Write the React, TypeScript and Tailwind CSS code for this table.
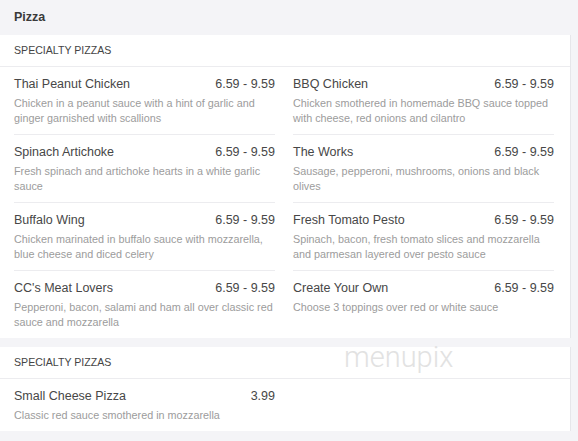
import React from "react";

type Item = { name: string; price: string; desc: string };

const specialty: Item[] = [
  { name: "Thai Peanut Chicken", price: "6.59 - 9.59", desc: "Chicken in a peanut sauce with a hint of garlic and ginger garnished with scallions" },
  { name: "BBQ Chicken", price: "6.59 - 9.59", desc: "Chicken smothered in homemade BBQ sauce topped with cheese, red onions and cilantro" },
  { name: "Spinach Artichoke", price: "6.59 - 9.59", desc: "Fresh spinach and artichoke hearts in a white garlic sauce" },
  { name: "The Works", price: "6.59 - 9.59", desc: "Sausage, pepperoni, mushrooms, onions and black olives" },
  { name: "Buffalo Wing", price: "6.59 - 9.59", desc: "Chicken marinated in buffalo sauce with mozzarella, blue cheese and diced celery" },
  { name: "Fresh Tomato Pesto", price: "6.59 - 9.59", desc: "Spinach, bacon, fresh tomato slices and mozzarella and parmesan layered over pesto sauce" },
  { name: "CC's Meat Lovers", price: "6.59 - 9.59", desc: "Pepperoni, bacon, salami and ham all over classic red sauce and mozzarella" },
  { name: "Create Your Own", price: "6.59 - 9.59", desc: "Choose 3 toppings over red or white sauce" },
];

const small: Item[] = [
  { name: "Small Cheese Pizza", price: "3.99", desc: "Classic red sauce smothered in mozzarella" },
];

function MenuItem({ item, last }: { item: Item; last: boolean }) {
  return (
    <div className={last ? "pt-2 pb-2" : "pt-2 pb-2 border-b border-[#ececef]"}>
      <div className="flex justify-between text-[12.5px] leading-[18px] text-[#474747]">
        <span>{item.name}</span>
        <span>{item.price}</span>
      </div>
      <div className="mt-[3px] text-[10.8px] leading-[15px] text-[#9c9c9c]">{item.desc}</div>
    </div>
  );
}

function Section({ items }: { items: Item[] }) {
  const rows = Math.ceil(items.length / 2);
  return (
    <div className="bg-white border-r border-[#e6e6ea] w-[571px]">
      <div className="h-[32px] flex items-center px-[14px] text-[10.6px] text-[#444] border-b border-[#ececef]">
        SPECIALTY PIZZAS
      </div>
      <div className="grid grid-cols-[261px_261px] gap-x-[18px] pl-[14px]">
        {items.map((it, i) => (
          <MenuItem key={it.name} item={it} last={Math.floor(i / 2) === rows - 1} />
        ))}
      </div>
    </div>
  );
}

export default function App() {
  return (
    <div
      className="relative w-[578px] h-[441px] overflow-hidden bg-[#f4f4f7]"
      style={{ fontFamily: "'Liberation Sans', Arial, sans-serif" }}
    >
      <div className="h-[35px] flex items-center px-[14px] text-[12.5px] font-bold text-[#3a3a3a]">
        Pizza
      </div>
      <Section items={specialty} />
      <div className="h-[9px]" />
      <Section items={small} />
      <div
        className="absolute left-[344px] top-[341px] text-[29px] leading-[32px] text-[#e2e2e2] pointer-events-none"
        style={{ fontFamily: "Roboto, sans-serif", fontWeight: 300 }}
      >
        menupix
      </div>
    </div>
  );
}
